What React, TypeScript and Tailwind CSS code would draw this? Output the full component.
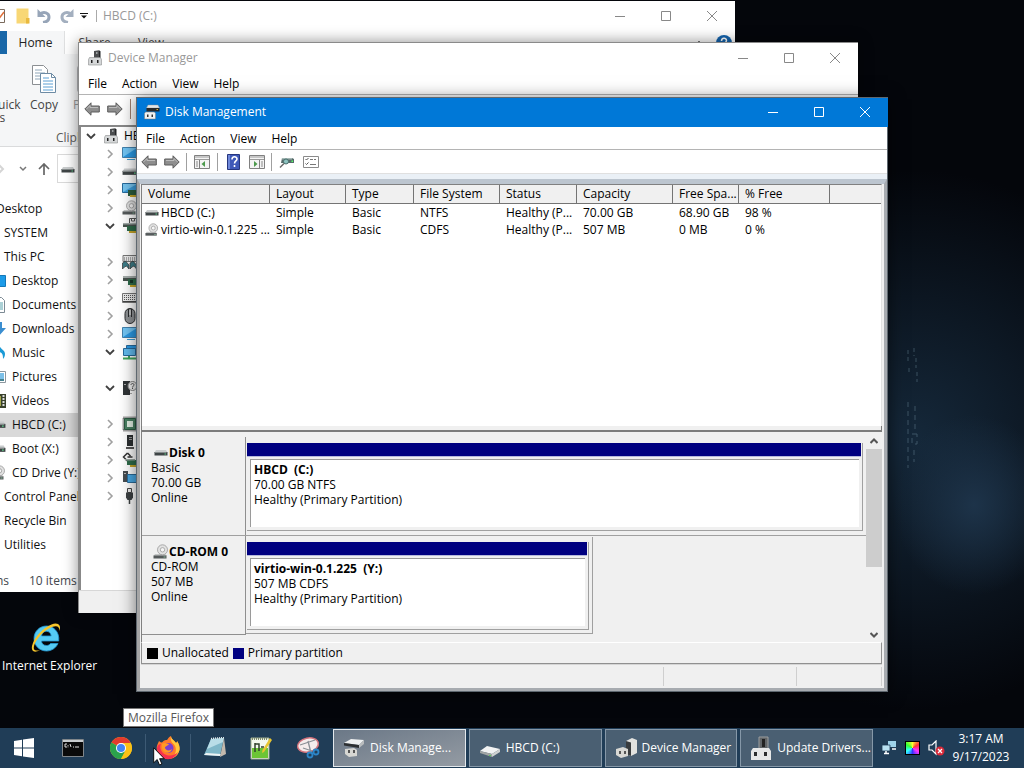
import React from 'react';

type IconProps = { className?: string };

/* ---------- hardware icons ---------- */

const DriveIcon: React.FC<IconProps> = ({ className = 'w-3.5 h-3.5' }) => (
  <svg viewBox="0 0 14 14" className={className}>
    <path d="M2 4h10l1.500 2.500H.5z" fill="#c9cccd" />
    <path d="M.5 6h13v3.500H.5z" fill="#3f4546" />
    <path d="M.5 6h12v1H.5z" fill="#858b8b" />
    <path d="M10.500 7.500h1.500v1h-1.500z" fill="#5fd08a" />
  </svg>
);

const CdIcon: React.FC<IconProps> = ({ className = 'w-4 h-4' }) => (
  <svg viewBox="0 0 16 16" className={className}>
    <path d="M2 10h10l2 2H.5z" fill="#c4c6c6" />
    <path d="M.5 11.500h13v3H.5z" fill="#555a5b" />
    <circle cx="9.500" cy="5.800" r="5" fill="#e2e2e2" stroke="#9a9a9a" strokeWidth="0.800" />
    <circle cx="9.500" cy="5.800" r="2.200" fill="#f6f6f6" stroke="#9a9a9a" strokeWidth="0.800" />
    <path d="M10.500 12.500h2v1h-2z" fill="#87b79a" />
  </svg>
);

const DeviceManagerIcon: React.FC<IconProps> = ({ className = 'w-3.5 h-4' }) => (
  <svg viewBox="0 0 14 16" className={className}>
    <path d="M6 1l5-.8V9H6z" fill="#4b4d4f" />
    <path d="M11 .2l1.500 1V9H11z" fill="#242628" />
    <path d="M8 2h1.500v2H8z" fill="#9ca0a2" />
    <path d="M1.500 7.500h11l1 2v5.500H.5V9.500z" fill="#d5d7d8" stroke="#8b8d8f" strokeWidth="0.600" />
    <path d="M3 10h1.500v3H3zM9 10h1.500v3H9z" fill="#222" />
  </svg>
);

const DiskManagementIcon: React.FC<IconProps> = ({ className = 'w-4 h-4' }) => (
  <svg viewBox="0 0 16 16" className={className}>
    <path d="M4 1h10l1.500 3H2.500z" fill="#e4e6e7" stroke="#8b8d8f" strokeWidth="0.400" />
    <path d="M2.500 4h13v3.500h-13z" fill="#26292a" />
    <path d="M12.500 5h1.500v1h-1.500z" fill="#d8b040" />
    <path d="M1.500 8h9l1 1.500V15H.5V9.500z" fill="#f0f1f1" stroke="#777" strokeWidth="0.500" />
    <path d="M3 10.500h1.500v2.500H3zM7.500 10.500H9v2.500H7.500z" fill="#333" />
  </svg>
);

const MonitorIcon: React.FC<IconProps> = ({ className = 'w-4 h-4' }) => (
  <svg viewBox="0 0 16 16" className={className}>
    <path d="M.5 1.500h15v10H.5z" fill="#2b9be6" stroke="#4382ad" />
    <path d="M1 2h14L1 11z" fill="#73c6f5" />
    <path d="M5 13.500h8" stroke="#3ba0d8" />
  </svg>
);

const DisplayAdapterIcon: React.FC<IconProps> = () => (
  <svg viewBox="0 0 16 16" className="h-4 w-4">
    <path d="M.5 1.500h15v9H.5z" fill="#3d9edc" stroke="#276a9c" />
    <path d="M1 2h14L1 10z" fill="#77c5f0" />
    <path d="M6 8h10v6H6z" fill="#2c5e3f" />
    <path d="M8 13h8v2H8z" fill="#c8a72b" />
  </svg>
);

const CardIcon: React.FC<IconProps> = () => (
  <svg viewBox="0 0 16 16" className="h-4 w-4">
    <path d="M1 5h14v4H1z" fill="#48534e" />
    <path d="M1 4h14v2H1z" fill="#a5adab" />
    <path d="M6 7h10v6H6z" fill="#2f6d4b" />
    <path d="M8 8h3v3H8z" fill="#17382a" />
    <path d="M8 13h8v2H8z" fill="#c8a72b" />
  </svg>
);

const FloppyCardIcon: React.FC<IconProps> = () => (
  <svg viewBox="0 0 16 16" className="h-4 w-4">
    <path d="M7.500.5h7v5h-7zM9.500 1v2h3V1" fill="#eee" stroke="#555" />
    <path d="M1 5h14v4H1z" fill="#48534e" />
    <path d="M1 5h14v1.500H1z" fill="#a5adab" />
    <path d="M5 8h11v5H5z" fill="#2f6d4b" />
    <path d="M7 13h9v2H7z" fill="#c8a72b" />
  </svg>
);

const HidIcon: React.FC<IconProps> = () => (
  <svg viewBox="0 0 16 16" className="h-4 w-4">
    <path d="M1 1.500h15v6H1z" fill="#eee" stroke="#777" />
    <path d="M2 4h14M2 6h14" stroke="#666" strokeDasharray="1 1" />
    <path d="M.5 15V9l3-2 3.500 4v4l-2.500-3-2 1zM8 15V9l3-2 3.500 4v4L12 12l-2 1z" fill="#3e7d88" stroke="#333" strokeWidth="0.700" />
  </svg>
);

const KeyboardIcon: React.FC<IconProps> = () => (
  <svg viewBox="0 0 16 16" className="h-4 w-4">
    <path d="M.5 3.500h15v9H.5z" fill="#ededed" stroke="#777" />
    <path d="M2 5.500h13M2 7.500h13M2 9.500h13" stroke="#555" strokeDasharray="1 1" />
    <path d="M1 11h14v1H1z" fill="#444" />
  </svg>
);

const MouseIcon: React.FC<IconProps> = () => (
  <svg viewBox="0 0 16 16" className="h-4 w-4">
    <rect x="3" y="0.500" width="10" height="15" rx="5" fill="#8f9295" stroke="#2a2c2e" />
    <path d="M6.500 1v8M9.500 1v8" stroke="#2a2c2e" />
    <path d="M7.500 2h1v5h-1z" fill="#eee" />
  </svg>
);

const NetworkIcon: React.FC<IconProps> = () => (
  <svg viewBox="0 0 16 16" className="h-4 w-4">
    <path d="M4.500 1.500h11v7h-11z" fill="#2b9be6" stroke="#276a9c" />
    <path d="M1.500 4.500h12v7h-12z" fill="#62bbee" stroke="#276a9c" />
    <path d="M1 14.500h15M7 12v2" stroke="#3fa45b" strokeWidth="2" />
  </svg>
);

const UnknownIcon: React.FC<IconProps> = () => (
  <svg viewBox="0 0 16 16" className="h-4 w-4">
    <path d="M1 1h7v14H1z" fill="#303436" />
    <path d="M2 4h2v1H2zM8 13h2v1H8z" fill="#aaa" />
    <circle cx="10.500" cy="6" r="4.500" fill="#eee" stroke="#888" />
    <path d="M9 5c0-2 3-2 3 0 0 1-1.500 1-1.500 2.500M10.500 8v1" stroke="#555" fill="none" />
  </svg>
);

const ProcessorIcon: React.FC<IconProps> = () => (
  <svg viewBox="0 0 16 16" className="h-4 w-4">
    <rect x="1.500" y="1.500" width="13" height="13" fill="none" stroke="#444" strokeWidth="2" strokeDasharray="1 1" />
    <path d="M2.500 2.500h11v11h-11z" fill="#4a8163" stroke="#2b5a41" />
    <path d="M5 5h6v6H5z" fill="#e2efe4" />
  </svg>
);

const TowerIcon: React.FC<IconProps> = () => (
  <svg viewBox="0 0 16 16" className="h-4 w-4">
    <path d="M5 1h6v11H5z" fill="#2c2f31" />
    <path d="M7 3h3v1H7zM7 5h3v1H7z" fill="#999" />
    <path d="M4 13h8v2H4z" fill="#555" />
  </svg>
);

const StorageIcon: React.FC<IconProps> = () => (
  <svg viewBox="0 0 16 16" className="h-4 w-4">
    <path d="M5.500 1L1.500 5l4 4M5.500 1l3 3M5.500 5h5" fill="none" stroke="#333" strokeWidth="1.500" />
    <path d="M5 8h11v5H5z" fill="#2f6d4b" />
    <path d="M3 7h10v1.500H3z" fill="#9aa5a0" />
    <path d="M8 13h8v2H8z" fill="#c8a72b" />
  </svg>
);

const SystemIcon: React.FC<IconProps> = () => (
  <svg viewBox="0 0 16 16" className="h-4 w-4">
    <path d="M1 1h5v11H1z" fill="#464c50" />
    <path d="M5.500 4.500h10v8h-10z" fill="#4aaae6" stroke="#2c6c9a" />
    <path d="M2 3h2v1H2z" fill="#bbb" />
  </svg>
);

const UsbIcon: React.FC<IconProps> = () => (
  <svg viewBox="0 0 16 16" className="h-4 w-4">
    <path d="M5.500.5h4v4h-4z" fill="#eee" stroke="#444" />
    <path d="M4 4.500h7v5l-1.500 2.500h-4L4 9.500z" fill="#3d4143" />
    <path d="M7.500 12v4" stroke="#3d4143" strokeWidth="1.500" />
  </svg>
);

const ArrowIcon: React.FC<{ right?: boolean }> = ({ right }) => (
  <svg viewBox="0 0 16 14" className={right ? 'h-3.5 w-4 -scale-x-100' : 'h-3.5 w-4'}>
    <path d="M.8 7L7 .8V4h8.300v6H7v3.200z" fill="#8e8e8e" stroke="#5c5c5c" />
    <path d="M2.500 7L6 3.500V5.500h8" fill="none" stroke="#bcbcbc" />
  </svg>
);

const Chevron: React.FC<{ open?: boolean }> = ({ open }) => (
  <svg viewBox="0 0 10 10" className="h-2.5 w-2.5 shrink-0">
    {open ? (
      <path d="M1 3l4 4 4-4" fill="none" stroke="#404040" strokeWidth="1.800" />
    ) : (
      <path d="M3 1l4 4-4 4" fill="none" stroke="#a0a0a0" strokeWidth="1.600" />
    )}
  </svg>
);

/* ---------- window parts ---------- */

const WindowControls: React.FC<{ color: string }> = ({ color }) => (
  <div className={`ml-auto flex h-full ${color}`}>
    <button aria-label="Minimize" className="flex w-[46px] items-center justify-center">
      <svg viewBox="0 0 10 10" className="h-2.5 w-2.5"><path d="M0 5.500h10" stroke="currentColor" /></svg>
    </button>
    <button aria-label="Maximize" className="flex w-[46px] items-center justify-center">
      <svg viewBox="0 0 10 10" className="h-2.5 w-2.5"><path d="M.5.500h9v9h-9z" fill="none" stroke="currentColor" /></svg>
    </button>
    <button aria-label="Close" className="flex w-[46px] items-center justify-center">
      <svg viewBox="0 0 10 10" className="h-2.5 w-2.5"><path d="M0 0l10 10M10 0L0 10" stroke="currentColor" /></svg>
    </button>
  </div>
);

const MenuBar: React.FC = () => (
  <nav className="flex h-[23px] shrink-0 items-center gap-[15px] border-b border-[#b4b4b4] bg-white pt-0.5 pl-[9px]">
    {['File', 'Action', 'View', 'Help'].map((item) => (
      <button key={item}>{item}</button>
    ))}
  </nav>
);

/* ---------- File Explorer ---------- */

const navItems = [
  { label: 'Desktop', pad: 'pl-[60px]' },
  { label: 'SYSTEM', pad: 'pl-[68px]' },
  { label: 'This PC', pad: 'pl-[68px]' },
  { label: 'Desktop', pad: 'pl-[54px]', icon: 'desktop' },
  { label: 'Documents', pad: 'pl-[54px]', icon: 'doc' },
  { label: 'Downloads', pad: 'pl-[54px]', icon: 'down' },
  { label: 'Music', pad: 'pl-[54px]', icon: 'music' },
  { label: 'Pictures', pad: 'pl-[54px]', icon: 'pic' },
  { label: 'Videos', pad: 'pl-[54px]', icon: 'video' },
  { label: 'HBCD (C:)', pad: 'pl-[54px]', icon: 'drive', selected: true },
  { label: 'Boot (X:)', pad: 'pl-[54px]', icon: 'drive' },
  { label: 'CD Drive (Y:)', pad: 'pl-[54px]', icon: 'cd' },
  { label: 'Control Panel', pad: 'pl-[68px]' },
  { label: 'Recycle Bin', pad: 'pl-[68px]' },
  { label: 'Utilities', pad: 'pl-[68px]' },
];

const NavIcon: React.FC<{ kind: string }> = ({ kind }) => {
  if (kind === 'drive') return <DriveIcon className="h-4 w-4" />;
  if (kind === 'cd') return <CdIcon />;
  return (
    <svg viewBox="0 0 16 16" className="h-4 w-4">
      {kind === 'desktop' && <path d="M0 2.500h15.500v11H0z" fill="#1c9be8" stroke="#1578b8" />}
      {kind === 'doc' && (
        <>
          <path d="M3.500.5h8l3 3v12h-11z" fill="#fff" stroke="#7c8a94" />
          <path d="M6 6h7M6 8h7M6 10h7M6 12h7" stroke="#58a3ad" />
        </>
      )}
      {kind === 'down' && <path d="M6 1h6v6h4l-7 8-7-8h4z" fill="#3b8ed0" />}
      {kind === 'music' && <path d="M9 0c1 4 6 5 6 9 0 2-1 4-2 5 0-5-1-6-4-7v7H7V0z" fill="#1b9ad6" />}
      {kind === 'pic' && (
        <>
          <path d="M.5 2.500h15v11H.5z" fill="#fff" stroke="#8c979e" />
          <path d="M2 4h12v8H2z" fill="#7cc0e8" />
          <path d="M2 9l5 1h7v2H2z" fill="#45818f" />
        </>
      )}
      {kind === 'video' && (
        <>
          <path d="M2 1h14v14H2z" fill="#39422c" />
          <path d="M4 3h7v10H4z" fill="#a4a84a" />
          <path d="M13.500 2v12" stroke="#ddd" strokeDasharray="2 1" strokeWidth="2" />
        </>
      )}
    </svg>
  );
};

const ExplorerWindow: React.FC = () => (
  <section className="absolute top-px -left-16 flex h-[591px] w-[799px] flex-col bg-white">
    <header className="flex h-[30px] shrink-0 items-center text-[#999]">
      <div className="flex items-center pl-[54px]">
        <svg viewBox="0 0 16 16" className="h-4 w-4">
          <path d="M1.500 1.500h13v13h-13z" fill="#fff" stroke="#7a6a5c" />
          <path d="M5 8l3 4 6-8" fill="none" stroke="#e0703a" strokeWidth="1.500" />
        </svg>
        <svg viewBox="0 0 14 16" className="ml-2.5 h-4 w-3.5">
          <path d="M.5.500h12v15H.5z" fill="#f8d775" />
          <path d="M10 10h3.500v5.500H10z" fill="#e9b93e" />
        </svg>
        <svg viewBox="0 0 14 14" className="ml-[7px] h-3.5 w-3.5">
          <path d="M3 5c4-3 9-1 9 3 0 3-2 5-6 5.500" fill="none" stroke="#97a5b8" strokeWidth="3" />
          <path d="M.5 0v8h8z" fill="#97a5b8" />
        </svg>
        <svg viewBox="0 0 14 14" className="ml-[9px] h-3.5 w-3.5">
          <path d="M11 5C7 2 2 4 2 8c0 3 2 5 6 5.500" fill="none" stroke="#a3afbf" strokeWidth="3" />
          <path d="M13.500 0v8h-8z" fill="#a3afbf" />
        </svg>
        <svg viewBox="0 0 8 6" className="ml-1.5 h-1.5 w-2">
          <path d="M0 .5h8" stroke="#111" />
          <path d="M1 2.500h6L4 5.500z" fill="#111" />
        </svg>
        <span className="mr-1.5 ml-2 h-3 w-px bg-[#aaa]" />
        <h2>HBCD (C:)</h2>
      </div>
      <WindowControls color="text-[#888]" />
    </header>

    <div className="flex h-[23px] shrink-0 items-center">
      <button className="h-full w-[71px] bg-[#1967a8] text-white">File</button>
      <button className="h-full w-[58px] border-r border-[#dfe0e1] bg-[#f5f6f7] pt-px text-[#222]">Home</button>
      <button className="w-[59px] pt-px text-[#444]">Share</button>
      <button className="w-[54px] pt-px text-[#444]">View</button>
      <svg viewBox="0 0 10 6" className="mr-3 ml-auto h-1.5 w-2.5"><path d="M1 5l4-4 4 4" fill="none" stroke="#777" /></svg>
      <svg viewBox="0 0 16 16" className="mr-[3px] h-4 w-4">
        <circle cx="8" cy="8" r="8" fill="#1463ad" />
        <path d="M5.500 6c0-3.500 5-3.500 5-.5C10.500 7.500 8 7.500 8 10M8 11.500v1.500" fill="none" stroke="#fff" strokeWidth="1.500" />
      </svg>
    </div>

    <div className="relative flex h-[93px] shrink-0 border-b border-[#dadbdc] bg-[#f5f6f7] pt-[11px] text-[#444]">
      <button className="flex w-[102px] flex-col items-center leading-[13px]">
        <span className="h-[33px]" />
        <span>Pin to Quick</span>
        <span>access</span>
      </button>
      <button className="flex w-[12px] flex-col items-center leading-[13px]">
        <svg viewBox="0 0 26 28" className="mb-[5px] h-7 w-[26px] shrink-0">
          <path d="M1.500.5h11l4 4v15h-15z" fill="#fff" stroke="#8b8f93" />
          <path d="M4 5h7M4 8h10M4 11h10M4 14h10" stroke="#8fa6b8" />
          <path d="M9.500 8.500h11l4 4v15h-15z" fill="#fff" stroke="#6d8ba4" />
          <path d="M20.500 8.500v4h4" fill="none" stroke="#6d8ba4" />
          <path d="M12 13h6M12 16h10M12 19h10M12 22h10M12 25h10" stroke="#5a9fd4" />
        </svg>
        <span>Copy</span>
      </button>
      <button className="ml-[23px] flex flex-col items-start leading-[13px] text-[#999]">
        <span className="mb-[5px] ml-1 h-7 w-6 rounded-sm bg-[#b4b6b9]" />
        <span>Paste</span>
      </button>
      <span className="absolute bottom-0 left-[120px] leading-4 text-[#5a5a5a]">Clipboard</span>
    </div>

    <div className="flex h-[43px] shrink-0 items-center pl-[60px]">
      <svg viewBox="0 0 10 12" className="h-3 w-2.5"><path d="M2 1l5 5-5 5" fill="none" stroke="#d5d5d5" strokeWidth="2" /></svg>
      <svg viewBox="0 0 8 8" className="ml-[13px] h-2 w-2"><path d="M1 2l3 3 3-3" fill="none" stroke="#777" strokeWidth="1.500" /></svg>
      <svg viewBox="0 0 12 12" className="ml-[11px] h-3 w-3"><path d="M6 12V1M1 6l5-5 5 5" fill="none" stroke="#666" strokeWidth="1.700" /></svg>
      <div className="ml-[7px] flex h-[29px] flex-1 items-center border border-[#d9d9d9] pt-0.5 pl-[3px]">
        <DriveIcon />
      </div>
    </div>

    <ul className="flex-1 pt-[7px]">
      {navItems.map((item, i) => (
        <li
          key={i}
          className={`flex h-6 items-center gap-1.5 text-[#111] ${item.pad} ${item.selected ? 'bg-[#d9d9d9]' : ''}`}
        >
          {item.icon && <NavIcon kind={item.icon} />}
          <span className="whitespace-nowrap">{item.label}</span>
        </li>
      ))}
    </ul>

    <footer className="flex h-[22px] shrink-0 items-center gap-5 text-[#44484e]">
      <span className="w-[73px] text-right">72 items</span>
      <span>10 items selected</span>
    </footer>
  </section>
);

/* ---------- Device Manager ---------- */

const tree: ({ open?: boolean; icon: React.ReactNode } | null)[] = [
  { icon: <MonitorIcon /> },
  { icon: <DriveIcon className="h-4 w-4" /> },
  { icon: <DisplayAdapterIcon /> },
  { icon: <CdIcon /> },
  { icon: <FloppyCardIcon />, open: true },
  null,
  { icon: <HidIcon /> },
  { icon: <CardIcon /> },
  { icon: <KeyboardIcon /> },
  { icon: <MouseIcon /> },
  { icon: <MonitorIcon /> },
  { icon: <NetworkIcon />, open: true },
  null,
  { icon: <UnknownIcon />, open: true },
  null,
  { icon: <ProcessorIcon /> },
  { icon: <TowerIcon /> },
  { icon: <StorageIcon /> },
  { icon: <SystemIcon /> },
  { icon: <UsbIcon /> },
];

const DeviceManagerWindow: React.FC = () => (
  <section className="absolute top-[42px] left-[78px] flex h-[571px] w-[780px] flex-col border-t border-l border-[#8a8a8a] bg-white shadow-[0_0_14px_rgba(0,0,0,0.45)]">
    <header className="flex h-[29px] shrink-0 items-center pl-[9px] text-[#999]">
      <DeviceManagerIcon />
      <h2 className="ml-1.5">Device Manager</h2>
      <WindowControls color="text-[#888]" />
    </header>
    <MenuBar />
    <div className="flex h-[30px] shrink-0 items-center gap-[7px] pb-0.5 pl-[5px]">
      <button aria-label="Back"><ArrowIcon /></button>
      <button aria-label="Forward"><ArrowIcon right /></button>
      <span className="h-5 w-px bg-[#a08070]" />
    </div>
    <div className="flex-1 border-t-2 border-l-2 border-[#888]">
      <div className="flex h-[18px] items-center pl-[5px]">
        <Chevron open />
        <span className="ml-2"><DeviceManagerIcon /></span>
        <span className="ml-1.5">HBCD-PE</span>
      </div>
      {tree.map((node, i) => (
        <div key={i} className="flex h-[18px] items-center pl-6">
          {node && (
            <>
              <Chevron open={node.open} />
              <span className="ml-[7px]">{node.icon}</span>
            </>
          )}
        </div>
      ))}
    </div>
    <footer className="h-[23px] shrink-0 border-t border-[#d7d7d7] bg-[#f0f0f0]" />
  </section>
);

/* ---------- Disk Management ---------- */

const columns = [
  { label: 'Volume', width: 'w-[128px]' },
  { label: 'Layout', width: 'w-[76px]' },
  { label: 'Type', width: 'w-[68px]' },
  { label: 'File System', width: 'w-[86px]' },
  { label: 'Status', width: 'w-[77px]' },
  { label: 'Capacity', width: 'w-[96px]' },
  { label: 'Free Spa...', width: 'w-[66px]' },
  { label: '% Free', width: 'w-[91px]' },
  { label: '', width: '' },
];

const volumes = [
  { icon: <DriveIcon />, name: 'HBCD (C:)', cells: ['Simple', 'Basic', 'NTFS', 'Healthy (P...', '70.00 GB', '68.90 GB', '98 %'] },
  { icon: <CdIcon className="h-4 w-3.5" />, name: 'virtio-win-0.1.225 ...', cells: ['Simple', 'Basic', 'CDFS', 'Healthy (P...', '507 MB', '0 MB', '0 %'] },
];

const VolumeTable: React.FC = () => (
  <table className="w-full table-fixed border-separate border-spacing-0 text-left">
    <thead>
      <tr className="h-[19px] bg-[#f0f0f0]">
        {columns.map((col) => (
          <th
            key={col.label}
            className={`h-[19px] border-r border-b border-[#747474] p-0 pl-1.5 leading-[18px] font-normal whitespace-nowrap last:border-r-0 ${col.width}`}
          >
            {col.label}
          </th>
        ))}
      </tr>
    </thead>
    <tbody>
      {volumes.map((v) => (
        <tr key={v.name} className="h-[17px]">
          <td className="h-[17px] p-0 pl-[3px] leading-[17px] whitespace-nowrap">
            <div className="flex h-[17px] items-center gap-0.5">
              {v.icon}
              <span>{v.name}</span>
            </div>
          </td>
          {v.cells.map((cell, i) => (
            <td key={i} className="h-[17px] p-0 pl-1.5 leading-[17px] whitespace-nowrap">{cell}</td>
          ))}
          <td className="p-0" />
        </tr>
      ))}
    </tbody>
  </table>
);

interface DiskRowProps {
  icon: React.ReactNode;
  name: string;
  info: string[];
  volume: string;
  details: string[];
  half?: boolean;
}

const DiskRow: React.FC<DiskRowProps> = ({ icon, name, info, volume, details, half }) => (
  <div className={`flex h-[99px] ${half ? '' : 'border-b border-[#a0a0a0]'}`}>
    <div className={`w-[104px] shrink-0 border-r border-[#8f8f8f] pt-2 pl-[9px] leading-[15px] ${half ? 'border-b' : ''}`}>
      <div className="flex h-[15px] items-center pl-0.5 font-bold">
        {icon}
        <span className="whitespace-nowrap">{name}</span>
      </div>
      {info.map((line) => (
        <div key={line}>{line}</div>
      ))}
    </div>
    <div className={half ? 'mt-px mb-px w-[347px] border-r border-b border-[#a0a0a0] pt-[5px] pr-[3px] pl-px' : 'mr-[3px] flex-1 pt-1.5 pl-px'}>
      <div className="flex h-[88px] flex-col border-r border-b border-[#a0a0a0] pr-px pb-[3px]">
        <div className="h-[14px] border-b border-[#b5b9dc] bg-[#000080] bg-clip-padding" />
        <div className="mt-0.5 mr-0.5 ml-[3px] flex-1 border-t border-l border-[#9a9a9a] bg-white pt-[2px] pl-[3px] leading-[15px]">
          <div className="font-bold whitespace-pre">{volume}</div>
          {details.map((line) => (
            <div key={line}>{line}</div>
          ))}
        </div>
      </div>
    </div>
  </div>
);

const PaneIcon: React.FC<{ right?: boolean }> = ({ right }) => (
  <svg viewBox="0 0 16 14" className="h-3.5 w-4">
    <path d="M.5.500h15v13H.5z" fill="#f4f4f4" stroke="#808080" />
    <path d="M1 2h14M1 4.500h14" stroke="#9a9a9a" />
    <path d={right ? 'M10.500 5v9' : 'M5.500 5v9'} stroke="#808080" />
    <path d={right ? 'M12 7h2M12 9h2M12 11h2' : 'M2 7h2M2 9h2M2 11h2'} stroke="#8a8a8a" />
    <path d={right ? 'M5 6v6l3.500-3z' : 'M11 6v6L7.500 9z'} fill="#4c9a4c" />
  </svg>
);

const DiskManagementWindow: React.FC = () => (
  <section className="absolute top-[97px] left-[136px] flex h-[595px] w-[752px] flex-col border border-[#5f6870] bg-white shadow-[0_2px_16px_rgba(0,0,0,0.55)]">
    <header className="-mr-px flex h-[29px] shrink-0 items-center bg-[#0078d7] pb-0.5 pl-[7px] text-white">
      <DiskManagementIcon />
      <h2 className="ml-[5px]">Disk Management</h2>
      <WindowControls color="text-white" />
    </header>
    <MenuBar />
    <div className="flex h-6 shrink-0 items-center border-b border-[#e0e0e0] pl-1">
      <button aria-label="Back"><ArrowIcon /></button>
      <button aria-label="Forward" className="ml-[7px]"><ArrowIcon right /></button>
      <span className="mr-[7px] ml-1.5 h-[18px] w-px bg-[#a0a0a0]" />
      <button aria-label="Console tree"><PaneIcon /></button>
      <span className="mx-[7px] h-[18px] w-px bg-[#a0a0a0]" />
      <button aria-label="Help" className="ml-[2px]">
        <svg viewBox="0 0 13 16" className="h-4 w-[13px]">
          <path d="M.5.500h12v15H.5z" fill="#3f59b8" stroke="#26367e" />
          <path d="M1 1h2v14H1z" fill="#6f88da" />
          <path d="M5 5.500c0-3.500 5-3.500 5-.5 0 2-2.500 2-2.500 4.500M7.500 11v2" fill="none" stroke="#fff" strokeWidth="1.600" />
        </svg>
      </button>
      <button aria-label="Action pane" className="ml-[9px]"><PaneIcon right /></button>
      <span className="mr-[7px] ml-1.5 h-[18px] w-px bg-[#a0a0a0]" />
      <button aria-label="Rescan disks">
        <svg viewBox="0 0 16 14" className="h-3.5 w-4">
          <path d="M3 3h10l2 1v4H2z" fill="#566b6a" />
          <path d="M3 3h10v1.500H3z" fill="#a4b8b5" />
          <path d="M12.500 5.500h1.500v1.500h-1.500z" fill="#5f6" />
          <circle cx="7" cy="6.500" r="2.500" fill="#8dc3c0" stroke="#4b6f6d" />
          <path d="M5 8.500l-4 4" stroke="#666" strokeWidth="1.500" />
        </svg>
      </button>
      <button aria-label="Properties" className="ml-2">
        <svg viewBox="0 0 16 12" className="h-3 w-4">
          <path d="M.5.500h15v11H.5z" fill="#fff" stroke="#8a8a8a" />
          <path d="M2.500 3l1 1 2-2M2.500 7.500l1 1 2-2" fill="none" stroke="#555" />
          <path d="M7 3.500h3M11 3.500h2M7 8.500h6" stroke="#777" />
        </svg>
      </button>
    </div>
    <div className="h-[5px] shrink-0 bg-[#eaf0f6]" />

    <div className="flex min-h-0 flex-1 flex-col border-t-[5px] border-r-[3px] border-b-[3px] border-l-[3px] border-t-[#bcc5cf] border-r-[#a7abb0] border-b-[#a7abb0] border-l-[#a5a5a5] bg-[#f0f0f0] pr-0.5 pl-px">
      <div className="min-h-0 flex-1 border-t border-r border-l border-[#808080] border-r-[#e3e3e3] bg-white">
        <VolumeTable />
      </div>
      <div className="h-1.5 shrink-0 border-r border-b-2 border-l border-[#7c7c7c] bg-[#f0f0f0]" />
      <div className="flex h-[210px] shrink-0 border-l border-[#808080]">
        <div className="flex-1 pt-[5px]">
          <DiskRow
            icon={<DriveIcon className="h-3.5 w-4" />}
            name="Disk 0"
            info={['Basic', '70.00 GB', 'Online']}
            volume="HBCD  (C:)"
            details={['70.00 GB NTFS', 'Healthy (Primary Partition)']}
          />
          <DiskRow
            icon={<CdIcon />}
            name="CD-ROM 0"
            info={['CD-ROM', '507 MB', 'Online']}
            volume="virtio-win-0.1.225  (Y:)"
            details={['507 MB CDFS', 'Healthy (Primary Partition)']}
            half
          />
        </div>
        <div className="flex w-4 flex-col items-center">
          <button aria-label="Scroll up" className="flex h-[17px] items-center">
            <svg viewBox="0 0 8 6" className="h-1.5 w-2"><path d="M.5 5L4 1.500 7.500 5" fill="none" stroke="#555" strokeWidth="2" /></svg>
          </button>
          <div className="h-[118px] w-full bg-[#cdcdcd]" />
          <div className="flex-1" />
          <button aria-label="Scroll down" className="flex h-[15px] items-center">
            <svg viewBox="0 0 8 6" className="h-1.5 w-2"><path d="M.5 1L4 4.500 7.500 1" fill="none" stroke="#555" strokeWidth="2" /></svg>
          </button>
        </div>
      </div>
      <div className="flex h-[22px] shrink-0 items-center border border-[#909090] border-t-white pl-[5px]">
        <span className="mr-1 h-[11px] w-[11px] bg-black" />
        <span>Unallocated</span>
        <span className="mx-1 h-[11px] w-[11px] bg-[#000080]" />
        <span>Primary partition</span>
      </div>
      <footer className="flex h-6 shrink-0 border-t border-[#d5d5d5]">
        <div className="my-0.5 flex-1 border-r border-[#cfcfcf]" />
        <div className="my-0.5 w-[133px] border-r border-[#cfcfcf]" />
        <div className="my-0.5 w-[85px] border-r border-[#cfcfcf]" />
      </footer>
    </div>
  </section>
);

/* ---------- taskbar ---------- */

const tasks = [
  {
    label: 'Disk Manage...',
    active: true,
    icon: (
      <svg viewBox="0 0 22 20" className="h-5 w-[22px] shrink-0">
        <path d="M1 5l7-4 13 1-5 5z" fill="#eef0f0" />
        <path d="M1 5l15 2v3L1 7.500z" fill="#2c2f31" />
        <path d="M16 7l5-5v4l-5 4z" fill="#b9bcbd" />
        <path d="M2 11l9-1 3 2v6l-8 1-4-3z" fill="#d7d7d3" />
        <path d="M5 12h2v3H5zM10 12h2v3h-2z" fill="#555" />
      </svg>
    ),
  },
  {
    label: 'HBCD (C:)',
    icon: (
      <svg viewBox="0 0 22 20" className="h-5 w-[22px] shrink-0">
        <path d="M1 13l7-5 13 3-8 5z" fill="#f2f3f3" />
        <path d="M1 13l12 3v3L1 15z" fill="#a2a5a4" />
        <path d="M13 16l8-5v3l-8 5z" fill="#cfd1d1" />
        <path d="M10 17h2v1h-2z" fill="#5c5" />
      </svg>
    ),
  },
  {
    label: 'Device Manager',
    icon: (
      <svg viewBox="0 0 22 20" className="h-5 w-[22px] shrink-0">
        <path d="M11 3l6-3 5 2v13l-6 3-5-2z" fill="#e2e2df" />
        <path d="M11 3l5 1.500V18l-5-2z" fill="#393c3e" />
        <path d="M1 11l7-2 5 2v7l-7 2-5-3z" fill="#d8d8d4" />
        <path d="M4 13h2v3H4zM9 13h2v3H9z" fill="#555" />
      </svg>
    ),
  },
  {
    label: 'Update Drivers...',
    icon: (
      <svg viewBox="0 0 22 24" className="h-6 w-[22px] shrink-0">
        <path d="M9 1h9v12H9z" fill="#606467" stroke="#9b9e9f" />
        <path d="M12 3h3v8h-3z" fill="#222" />
        <path d="M3 12h16l2 3v9H1v-9z" fill="#e6e7e7" />
        <path d="M4 16h3v4H4zM14 16h3v4h-3z" fill="#2b2d2e" />
      </svg>
    ),
  },
];

const Taskbar: React.FC = () => (
  <footer className="relative flex h-10 shrink-0 items-center bg-[#203d57] text-white">
    <button aria-label="Start" className="flex w-12 justify-center">
      <svg viewBox="0 0 20 20" className="h-5 w-5">
        <path d="M0 3l8-1.200V9.500H0zM9 1.600L20 0v9.500H9zM0 10.500h8v7.700L0 17zM9 10.500h11V20L9 18.400z" fill="#fff" />
      </svg>
    </button>
    <button aria-label="Command Prompt" className="flex w-[49px] justify-center">
      <svg viewBox="0 0 22 18" className="h-[18px] w-[22px]">
        <path d="M.5.500h21v17H.5z" fill="#0a0a0a" stroke="#80868a" />
        <path d="M1 1h20v2H1z" fill="#c8ccce" />
        <path d="M3 5v3M3 5h2M3 8h2M6 6v.8M6 7.500v.8M8 5l1 3M11 8h1M13 8h4" stroke="#ddd" />
      </svg>
    </button>
    <button aria-label="Google Chrome" className="flex w-12 justify-center">
      <svg viewBox="0 0 24 24" className="h-[22px] w-[22px]">
        <circle cx="12" cy="12" r="12" fill="#f9c21b" />
        <path d="M12 12L1.600 6A12 12 0 0 1 22.400 6z" fill="#e33b2e" />
        <path d="M12 12L1.600 6A12 12 0 0 0 12 24l5.200-9z" fill="#2ba24c" />
        <path d="M12 6.500h10.600A12 12 0 0 1 12 24l4.800-9.200z" fill="#fbc116" />
        <circle cx="12" cy="12" r="5.500" fill="#fff" />
        <circle cx="12" cy="12" r="4.400" fill="#4285f4" />
      </svg>
    </button>
    <button aria-label="Mozilla Firefox" className="flex h-7 w-[46px] items-center justify-center border-r border-l border-[#3d5a74]">
      <svg viewBox="0 0 24 24" className="h-6 w-6">
        <path d="M3 5c1 1 2 1.500 3 1.500C8 4 10 4 11 4c1-1.500 2-3 4-4 0 3 3 4 5 7 1-1 1-1 1-2 2 3 3 6 2.500 9A11.500 11.500 0 0 1 1 14C0 10 2 8 3 5z" fill="#ff7a2a" />
        <path d="M15 0c0 3 3 4 5 7 1-1 1-1 1-2 2 3 3 6 2.500 9-1 4-4 7-7 8 5-6 4-12 0-15-2-2-2-5-1.500-7z" fill="#ffc83c" />
        <path d="M1 13c1 7 7 11 13 10 4-1 7-4 8-7-4 5-14 5-17-2-1-2-1-4 0-6-3 0-4 3-4 5z" fill="#f5304f" />
        <circle cx="12.500" cy="12" r="5" fill="#7a3fd0" />
        <path d="M6 8c3-2 5 0 7 0-1 2-4 2-4 4 1 3 5 3 7 1-1 5-9 5-10-1z" fill="#ff9a24" />
      </svg>
    </button>
    <button aria-label="Notepad" className="flex w-[47px] justify-center">
      <svg viewBox="0 0 24 22" className="h-[22px] w-6">
        <path d="M8 2l13-1-4 18L1 18z" fill="#7fb7c8" />
        <path d="M8 2l13-1-1 4L4 12z" fill="#b9dde7" />
        <path d="M1 18l16 1 1-2L3 16z" fill="#eef3f4" />
        <path d="M21 1l2 16-6 3z" fill="#c3b9ad" />
        <path d="M8 1.500l13-1" stroke="#e8eef0" strokeDasharray="1 1" strokeWidth="1.500" />
      </svg>
    </button>
    <button aria-label="Notepad++" className="flex w-[46px] justify-center">
      <svg viewBox="0 0 22 24" className="h-6 w-[22px]">
        <path d="M1 2h18v21H1z" fill="#f4f7ee" stroke="#9cab8c" />
        <path d="M2 12h16v10H2z" fill="#6cc534" />
        <path d="M2 3h16" stroke="#7d8b6c" strokeDasharray="1 1" strokeWidth="2" />
        <path d="M5 7v9M5 8h4v7M11 11h3M15 11h2" fill="none" stroke="#31402c" strokeWidth="1.500" />
        <path d="M20 2l2 2-8 12-2 1 .5-3z" fill="#e8c531" />
      </svg>
    </button>
    <button aria-label="Snipping Tool" className="flex w-12 justify-center">
      <svg viewBox="0 0 24 24" className="h-6 w-6">
        <ellipse cx="12" cy="9" rx="10.500" ry="7" fill="#f5ecec" stroke="#d4737c" strokeWidth="1.500" transform="rotate(-12 12 9)" />
        <path d="M4 9l15-5M7 12l9 3M12 5l3 12" stroke="#8a8f96" strokeWidth="1.300" />
        <circle cx="14" cy="19" r="2.500" fill="none" stroke="#2c86c9" strokeWidth="1.800" />
        <circle cx="20" cy="16" r="2.500" fill="none" stroke="#2c86c9" strokeWidth="1.800" />
      </svg>
    </button>

    <div className="flex h-full min-w-0 flex-1 gap-[3px] py-px pl-px">
      {tasks.map((task) => (
        <button
          key={task.label}
          className={`flex min-w-0 flex-1 items-center gap-[5px] border pl-[9px] ${
            task.active ? 'border-[#e3e8ec] bg-linear-to-br from-[#6b7887] to-[#949ba3]' : 'border-[#8698a8] bg-[#4a5f72]'
          }`}
        >
          {task.icon}
          <span className="whitespace-nowrap">{task.label}</span>
        </button>
      ))}
    </div>

    <div className="flex w-[151px] shrink-0 items-center pl-2">
      <svg viewBox="0 0 16 14" className="h-3.5 w-4">
        <path d="M7 0h8v6H7z" fill="#9fd3ea" />
        <path d="M1 4h8v6H1z" fill="#b9e2f2" stroke="#203d57" strokeWidth="0.800" />
        <path d="M3 12.500h5M5 10v2M11 8h4" stroke="#fff" strokeWidth="1.500" />
      </svg>
      <div className="ml-2 h-[14px] w-[15px] border border-black bg-[conic-gradient(from_0deg,#ff3,#f33,#f3f,#33f,#3ff,#3f3,#ff3)]" />
      <svg viewBox="0 0 18 16" className="ml-2 h-4 w-[18px]">
        <path d="M1 5h3l4-4v13l-4-4H1z" fill="none" stroke="#fff" strokeWidth="1.200" />
        <circle cx="12" cy="11" r="4.500" fill="#d92a3a" />
        <path d="M10 9l4 4M14 9l-4 4" stroke="#fff" strokeWidth="1.200" />
      </svg>
      <div className="flex-1 pr-2 text-center leading-[18px]">
        <div>3:17 AM</div>
        <div>9/17/2023</div>
      </div>
    </div>

    {/* Tooltip of the hovered button */}
    <div role="tooltip" className="absolute bottom-[41px] left-[123px] h-[19px] border border-[#767676] bg-white px-1 leading-[17px] text-[#575757]">
      Mozilla Firefox
    </div>
    <svg viewBox="0 0 12 19" className="absolute top-[19px] left-[153px] h-[19px] w-3">
      <path d="M.7.800v15l3.500-3.300 2.300 5.500 2.400-1-2.300-5.300h4.700z" fill="#fff" stroke="#000" strokeWidth="0.900" />
    </svg>
  </footer>
);

/* ---------- desktop ---------- */

const Desktop: React.FC = () => (
  <main className="relative min-h-0 flex-1 overflow-hidden bg-[#04060b] bg-[radial-gradient(ellipse_80px_90px_at_974px_505px,#1d3349,transparent),radial-gradient(ellipse_260px_270px_at_915px_440px,#15283a,transparent)]">
    <svg viewBox="0 0 20 140" className="absolute top-[346px] left-[902px] h-[140px] w-5 opacity-40">
      <path d="M6 4v12M12 2v8M14 12v10M7 22v6M15 26v10" stroke="#7898a8" strokeDasharray="4 3" />
      <path d="M6 56v66M13 60v24M15 88h-5v10h5zM12 104v12" fill="none" stroke="#7898a8" strokeDasharray="5 4" />
    </svg>

    <a href="#internet-explorer" className="absolute top-[622px] left-0 pl-0.5 text-white">
      <svg viewBox="0 0 32 32" className="ml-7 h-8 w-8">
        <path
          d="M16.500 4C9.500 4 4 9.500 4 16.500S9.500 29 16.500 29c5 0 9.500-3 11.500-7.500h-7.500c-1 1.500-2.500 2-4 2-3 0-5-2-5-4.500h17.200c1-9-5-15-12.200-15zM11.500 14c.3-3 2.200-4.700 4.800-4.700s4.700 1.700 4.900 4.700z"
          fill="#55cbf4"
          stroke="#2498d4"
          strokeWidth="0.800"
        />
        <path d="M29.500 9c2-6-1.500-9-8-6.500C13 6 4 15 2 24c-1 6 3 7 8 4-5 1.500-7 0-6-4C6 17 14 8 22 5c5-2 7.500-.5 7.500 4z" fill="#f6c52c" />
      </svg>
      <span className="mt-1 block whitespace-nowrap">Internet Explorer</span>
    </a>

    <ExplorerWindow />
    <DeviceManagerWindow />
    <DiskManagementWindow />
  </main>
);

export default function App() {
  return (
    <div className="flex h-screen flex-col overflow-hidden font-['Open_Sans','Noto_Sans',sans-serif] text-xs text-black">
      <Desktop />
      <Taskbar />
    </div>
  );
}
